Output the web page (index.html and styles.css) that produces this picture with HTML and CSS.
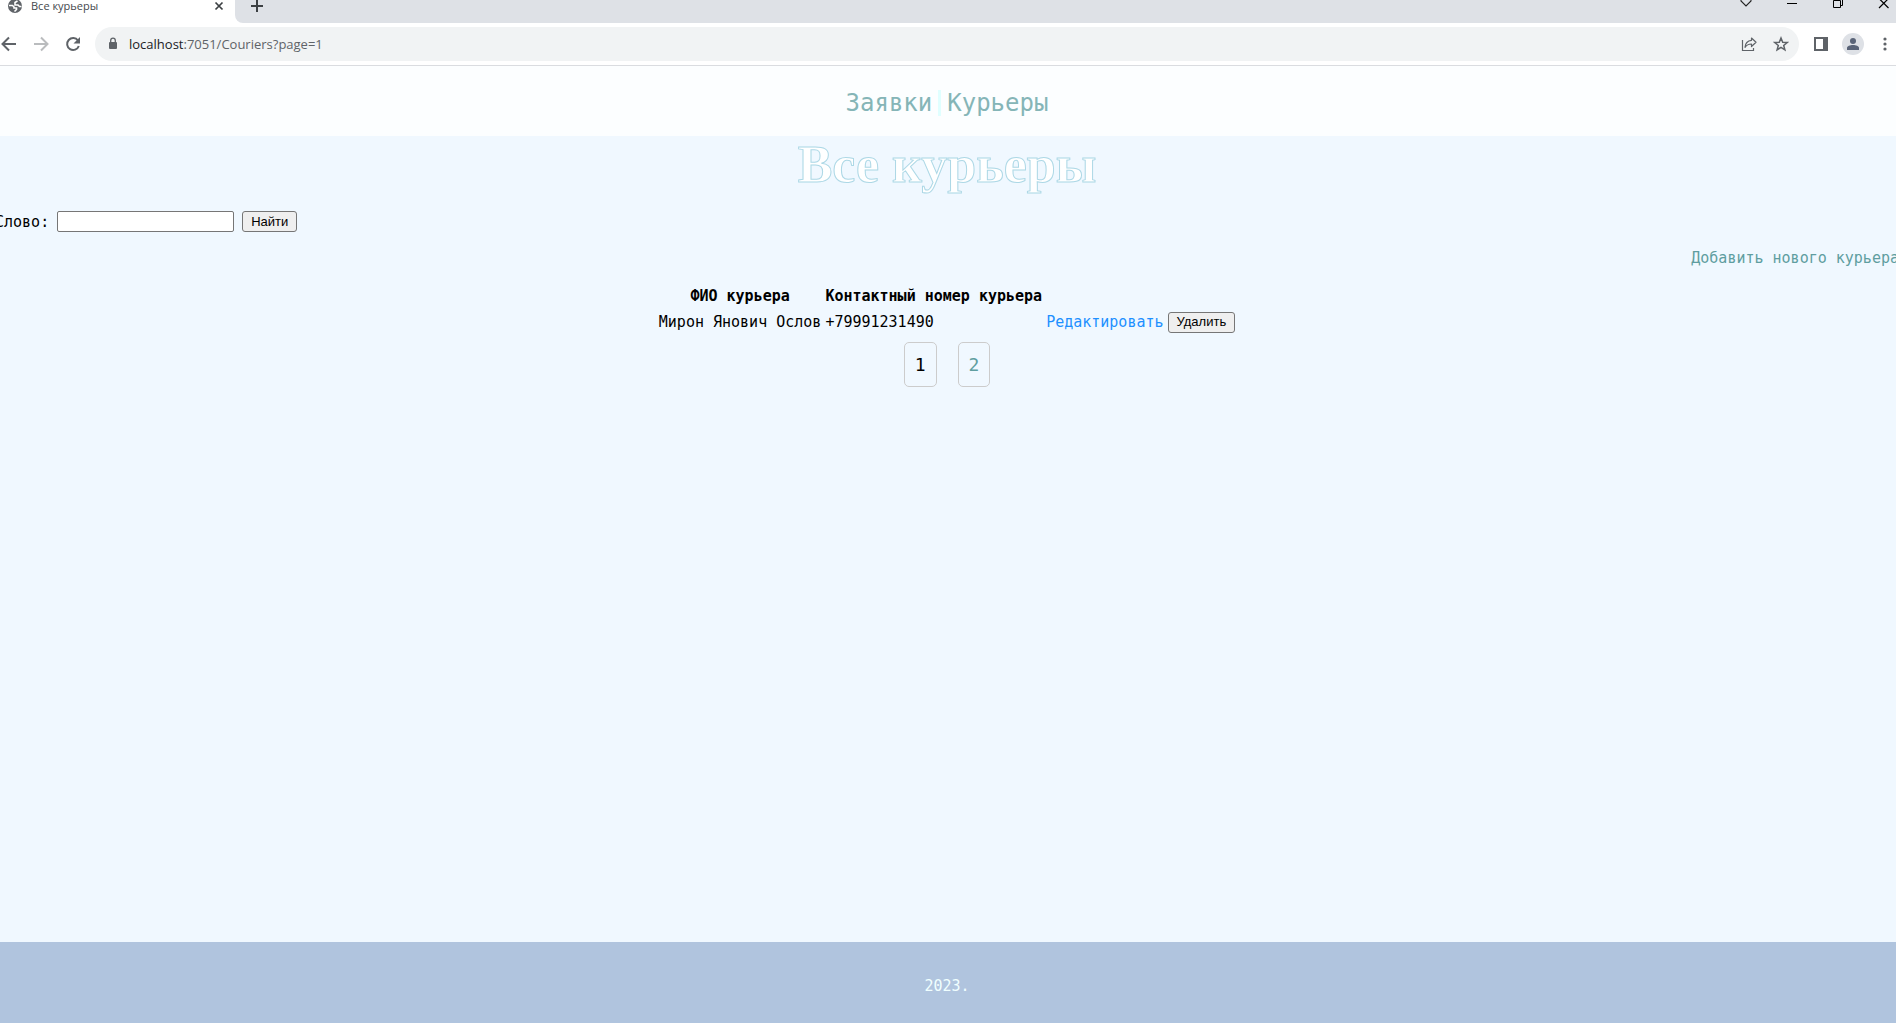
FILE: index.html
```html
<!DOCTYPE html>
<html lang="ru">
<head>
<meta charset="utf-8">
<title>Все курьеры</title>
<link rel="stylesheet" href="styles.css">
</head>
<body>
<div class="browser">
  <div class="tabstrip">
    <div class="tab">
      <svg class="globe" width="16" height="16" viewBox="0 0 16 16"><circle cx="8" cy="8" r="7" fill="#5f6368"/><path d="M2 7.500h3.500l1.500 1.500v1h2.500v1.500L7.500 13.500M10.500 3L8 4.500v2.500h3l1.500 1.500h2" fill="none" stroke="#fff" stroke-width="1.600"/></svg>
      <span class="tab-title">Все курьеры</span>
      <button class="plain" aria-label="Закрыть вкладку"><svg width="12" height="12" viewBox="0 0 12 12"><path d="M2.500 2.500l7 7m0-7l-7 7" stroke="#3c4043" stroke-width="1.700"/></svg></button>
    </div>
    <div class="strip">
      <button class="plain" aria-label="Новая вкладка"><svg width="14" height="14" viewBox="0 0 14 14"><path d="M7 0v12M1 6h12" stroke="#3c4043" stroke-width="2"/></svg></button>
      <div class="window-buttons">
        <button class="plain" aria-label="Поиск вкладок"><svg width="12" height="12" viewBox="0 0 12 12"><path d="M1 0v1l5 5 5-5V0" fill="none" stroke="#222" stroke-width="1.100"/></svg></button>
        <button class="plain" aria-label="Свернуть"><svg width="12" height="12" viewBox="0 0 12 12"><path d="M1 3.500h10" stroke="#000"/></svg></button>
        <button class="plain" aria-label="Восстановить"><svg width="12" height="12" viewBox="0 0 12 12"><path d="M1.500.5h7v7h-7zM10.500 0v5.500h-2" fill="none" stroke="#000"/></svg></button>
        <button class="plain" aria-label="Закрыть"><svg width="12" height="12" viewBox="0 0 12 12"><path d="M1-1.500l9.500 9.500m0-9.500L1 8" stroke="#000" stroke-width="1.200"/></svg></button>
      </div>
    </div>
  </div>
  <div class="toolbar">
    <div class="history">
      <button class="plain" aria-label="Назад"><svg width="16" height="16" viewBox="0 0 16 16"><path d="M15 8H2.500M8 1.500L1.500 8 8 14.500" fill="none" stroke="#5f6368" stroke-width="2"/></svg></button>
      <button class="plain" aria-label="Вперёд"><svg width="16" height="16" viewBox="0 0 16 16"><path d="M1 8h12.500M8 1.500L14.500 8 8 14.500" fill="none" stroke="#babcbe" stroke-width="2"/></svg></button>
      <button class="plain" aria-label="Обновить"><svg width="16" height="16" viewBox="0 0 16 16"><path d="M13 4.500A6 6 0 1 0 13.800 10" fill="none" stroke="#5f6368" stroke-width="2"/><path d="M15 1v6.500H8.500z" fill="#5f6368"/></svg></button>
    </div>
    <div class="address">
      <svg width="10" height="14" viewBox="0 0 10 14"><rect x="1" y="5" width="8" height="7" rx="1" fill="#5f6368"/><path d="M2.700 6V3.500a2.300 2.300 0 0 1 4.600 0V6" fill="none" stroke="#5f6368" stroke-width="1.300"/></svg>
      <span class="url"><span class="host">localhost</span>:7051/Couriers?page=1</span>
      <button class="plain" aria-label="Поделиться"><svg width="16" height="16" viewBox="0 0 16 16"><path d="M1.500 4v10.500h11V12" fill="none" stroke="#5f6368" stroke-width="1.200"/><path d="M10.500 2l4.500 4.300-4.500 4.200V8C7.500 8 5.500 9 4 11.300c.3-4 2.500-6.600 6.500-7z" fill="none" stroke="#5f6368" stroke-width="1.200" stroke-linejoin="round"/></svg></button>
      <button class="plain" aria-label="Добавить в закладки"><svg width="16" height="16" viewBox="0 0 16 16"><path d="M8 2l1.700 4.200 4.500.3-3.500 2.900 1.200 4.400L8 11.400l-3.900 2.400 1.200-4.400-3.500-2.900 4.500-.3z" fill="none" stroke="#5f6368" stroke-width="1.500"/></svg></button>
    </div>
    <div class="tools">
      <button class="plain" aria-label="Боковая панель"><svg width="16" height="16" viewBox="0 0 16 16"><path d="M1 1h14v14H1zM3 3v10h7V3z" fill="#5f6368" fill-rule="evenodd"/></svg></button>
      <button class="plain" aria-label="Профиль"><svg width="22" height="22" viewBox="0 0 22 22"><circle cx="11" cy="11" r="11" fill="#dee1e6"/><circle cx="11" cy="8" r="3" fill="#5a6478"/><path d="M5 17v-2c0-2 3-3 6-3s6 1 6 3v2z" fill="#5a6478"/></svg></button>
      <button class="plain" aria-label="Меню"><svg width="16" height="16" viewBox="0 0 16 16"><g fill="#5f6368"><circle cx="8" cy="3" r="1.600"/><circle cx="8" cy="8" r="1.600"/><circle cx="8" cy="13" r="1.600"/></g></svg></button>
    </div>
  </div>
</div>
<div class="page">
  <header class="site-header">
    <nav class="menu">
      <a href="#">Заявки</a>
      <a href="#">Курьеры</a>
    </nav>
  </header>
  <main class="content">
    <h1 class="title">Все курьеры</h1>
    <form class="search">
      <label for="word">Слово:</label>
      <input id="word" class="field" type="text">
      <button class="button" type="button">Найти</button>
    </form>
    <p class="add"><a href="#">Добавить нового курьера</a></p>
    <table class="couriers">
      <thead><tr><th>ФИО курьера</th><th>Контактный номер курьера</th><td></td><td></td></tr></thead>
      <tbody><tr><td>Мирон Янович Ослов</td><td>+79991231490</td><td><a class="edit" href="#">Редактировать</a></td><td><button class="button" type="button">Удалить</button></td></tr></tbody>
    </table>
    <nav class="pages" aria-label="Страницы">
      <span class="page-link">1</span>
      <a class="page-link" href="#">2</a>
    </nav>
  </main>
  <footer class="footer">2023.</footer>
</div>
</body>
</html>
```
FILE: styles.css
```css
* {
  box-sizing: border-box;
}

body {
  margin: 0;
  min-height: 100vh;
  display: flex;
  flex-direction: column;
  overflow-x: hidden;
  background: #f0f8ff;
  color: #000;
  font: 15px/20px "DejaVu Sans Mono", monospace;
}

a {
  color: #5f9ea0;
  text-decoration: none;
}

svg {
  display: block;
  flex: none;
}

.plain {
  padding: 0;
  border: 0;
  background: none;
}

/* Browser window */
.browser {
  font-family: "Open Sans", sans-serif;
  background: #fff;
}

.tabstrip {
  display: flex;
  height: 23px;
}

.tab {
  display: flex;
  align-items: center;
  gap: 8px;
  width: 235px;
  height: 12px;
  padding: 0 10px 0 7px;
}

.tab-title {
  flex: 1;
  font-size: 11px;
  line-height: 16px;
  color: #45494d;
}

.strip {
  flex: 1;
  display: flex;
  justify-content: space-between;
  align-items: flex-start;
  padding: 0 1px 0 15px;
  background: #dee1e6;
  border-bottom-left-radius: 8px;
}

.window-buttons {
  display: flex;
  gap: 34px;
  padding-right: 5px;
}

.toolbar {
  display: flex;
  align-items: center;
  gap: 14px;
  height: 43px;
  padding: 0 3px 0 1px;
  border-bottom: 1px solid #dadce0;
}

.history {
  display: flex;
  gap: 16px;
}

.tools {
  display: flex;
  align-items: center;
  gap: 13px;
}

.address {
  flex: 1;
  display: flex;
  align-items: center;
  gap: 16px;
  height: 34px;
  padding: 0 10px 0 13px;
  border-radius: 17px;
  background: #f1f3f4;
}

.address .url {
  flex: 1;
  margin-left: -5px;
  font-size: 13px;
  color: #5f6368;
}

.host {
  color: #202124;
}

/* Site */
.page {
  flex: 1;
  display: flex;
  flex-direction: column;
  margin: 0 -3px 0 -5px;
}

.site-header {
  padding: 24px 0 20px;
  background: #fcfeff;
}

.menu {
  display: flex;
  justify-content: center;
  font-size: 24px;
  line-height: 26px;
}

.menu a {
  padding: 0 6px;
  color: #85b5b7;
}

.menu a + a {
  border-left: 3px solid #e0ffff;
}

.content {
  flex: 1;
}

.title {
  margin: 0;
  padding: 1px 0 18px;
  font: bold 52px/56px "Liberation Serif", serif;
  text-align: center;
  color: #fff;
  -webkit-text-stroke: 1px #add8e6;
}

.search {
  display: flex;
  align-items: center;
  gap: 8px;
}

.field {
  width: 177px;
  height: 21px;
  border: 1px solid #767676;
  border-radius: 2px;
  background: #fff;
}

.button {
  height: 21px;
  padding: 0 8px;
  border: 1px solid #767676;
  border-radius: 3px;
  background: #efefef;
  color: #000;
  font: 13px/18px "Liberation Sans", sans-serif;
}

.add {
  margin: 16px 0 14px;
  text-align: right;
}

.couriers {
  margin: 0 auto;
  border-spacing: 2px;
}

.couriers th,
.couriers td {
  height: 24px;
  padding: 1px;
}

.couriers .edit {
  color: #1e90ff;
}

.couriers .button {
  display: block;
}

.pages {
  display: flex;
  justify-content: center;
  gap: 21px;
  margin-top: 6px;
}

.page-link {
  padding: 10px;
  border: 1px solid #ccc;
  border-radius: 5px;
  font-size: 18px;
  line-height: 23px;
}

.footer {
  padding: 34px 0 27px;
  background: #b0c4de;
  color: #f0ffff;
  text-align: center;
}
```
